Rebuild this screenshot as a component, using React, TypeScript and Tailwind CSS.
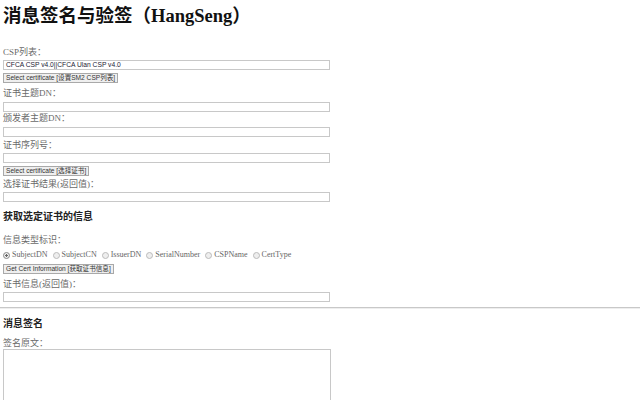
const serif = "font-['Liberation_Serif','Noto_Sans_CJK_SC',serif]";
const sans = "font-['Liberation_Sans','Noto_Sans_CJK_SC',sans-serif]";

const Label = ({ text, mt }: { text: string; mt: string }) => (
  <div className={`${mt} h-[10px] overflow-visible whitespace-nowrap text-[9px] leading-[10px] text-[#6a6a6a] ${serif}`}>{text}</div>
);

const TextBox = ({ mt, value = "" }: { mt: string; value?: string }) => (
  <div
    className={`${mt} w-[327px] h-[10px] overflow-hidden whitespace-nowrap border border-[#c8c8c8] bg-white px-[2px] text-[6.7px] leading-[8px] text-[#223] ${sans}`}
  >
    {value}
  </div>
);

const Btn = ({ text, mt }: { text: string; mt: string }) => (
  <div
    className={`${mt} w-fit h-[10px] whitespace-nowrap border border-[#a9a9a9] bg-[#efefef] px-[2px] text-[6.6px] leading-[8px] text-[#333] ${sans}`}
  >
    {text}
  </div>
);

const radios = ["SubjectDN", "SubjectCN", "IssuerDN", "SerialNumber", "CSPName", "CertType"];

export default function App() {
  return (
    <div className="w-[640px] h-[400px] overflow-hidden bg-white">
      <div className="pl-[3px]">
        <h1 className={`pt-[5px] h-[27px] text-[18.5px] leading-[22px] font-bold text-[#111] ${serif}`}>
          消息签名与验签（HangSeng）
        </h1>

        <Label text="CSP列表：" mt="mt-[20px]" />
        <TextBox mt="mt-[3px]" value="CFCA CSP v4.0||CFCA Ulan CSP v4.0" />
        <Btn mt="mt-[3px]" text="Select certificate [设置SM2 CSP列表]" />
        <Label text="证书主题DN：" mt="mt-[5px]" />
        <TextBox mt="mt-[4px]" />
        <Label text="颁发者主题DN：" mt="mt-[1px]" />
        <TextBox mt="mt-[4px]" />
        <Label text="证书序列号：" mt="mt-[3px]" />
        <TextBox mt="mt-[3px]" />
        <Btn mt="mt-[3px]" text="Select certificate [选择证书]" />
        <Label text="选择证书结果(返回值)：" mt="mt-[3px]" />
        <TextBox mt="mt-[3px]" />

        <div className={`mt-[9px] h-[12px] text-[10px] leading-[12px] font-bold text-[#222] ${serif}`}>
          获取选定证书的信息
        </div>
        <Label text="信息类型标识：" mt="mt-[12px]" />
        <div className={`mt-[5px] flex h-[10px] items-center gap-[5px] text-[8px] leading-[10px] text-[#666] ${serif}`}>
          {radios.map((r, i) => (
            <label key={r} className="flex items-center gap-[2px]">
              <span
                className={`inline-block h-[7px] w-[7px] rounded-full border ${
                  i === 0 ? "border-[#888] bg-[radial-gradient(circle,#666_35%,#eee_40%)]" : "border-[#bbb] bg-[#eee]"
                }`}
              />
              {r}
            </label>
          ))}
        </div>
        <Btn mt="mt-[4px]" text="Get Cert Information [获取证书信息]" />
        <Label text="证书信息(返回值)：" mt="mt-[5px]" />
        <TextBox mt="mt-[3px]" />
      </div>

      <div className="mt-[5px] h-[2px] border-t border-b border-t-[#c8c8c8] border-b-[#eee]" />

      <div className="pl-[3px]">
        <div className={`mt-[9px] h-[12px] text-[10px] leading-[12px] font-bold text-[#222] ${serif}`}>
          消息签名
        </div>
        <Label text="签名原文：" mt="mt-[8px]" />
        <div className="mt-[1px] w-[328px] h-[80px] border border-[#c8c8c8] bg-white" />
      </div>
    </div>
  );
}
